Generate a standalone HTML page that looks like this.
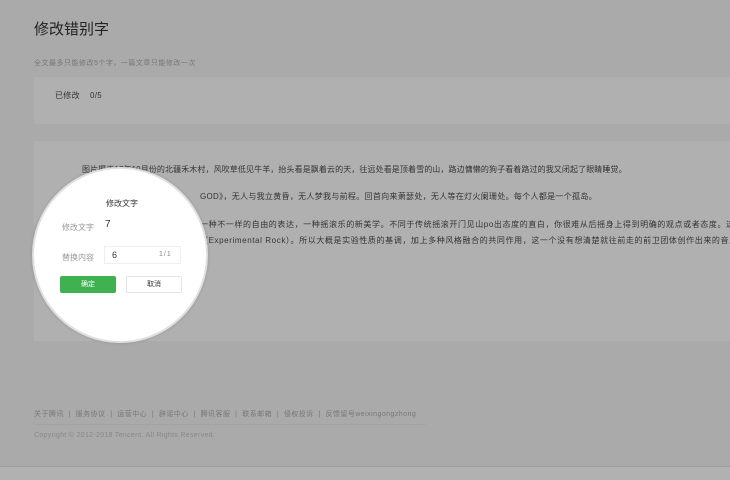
<!DOCTYPE html><html><head><meta charset="utf-8"><style>
*{margin:0;padding:0;box-sizing:border-box}
body{width:730px;height:480px;background:#aaaaaa;font-family:"Liberation Sans","Noto Sans CJK SC",sans-serif;position:relative;overflow:hidden;color:#333}
.a{position:absolute;white-space:nowrap}
.p{position:absolute;background:#b0b0b0}
.t{font-size:8px;color:#333;letter-spacing:0.3px}
</style></head><body>
<div class="a" style="left:34px;top:18px;font-size:15px;color:#222">修改错别字</div>
<div class="a" style="left:34px;top:58px;font-size:7px;color:#777;letter-spacing:0.5px">全文最多只能修改5个字，一篇文章只能修改一次</div>
<div class="p" style="left:34px;top:77px;width:700px;height:47px"></div>
<div class="a t" style="left:55px;top:90px">已修改&nbsp;&nbsp;&nbsp;&nbsp;0/5</div>
<div class="p" style="left:34px;top:141px;width:700px;height:200px"></div>
<div class="a t" style="left:82px;top:164px;letter-spacing:0.1px">图片摄于17年10月份的北疆禾木村，风吹草低见牛羊，抬头看是飘着云的天，往远处看是顶着雪的山，路边慵懒的狗子看着路过的我又闭起了眼睛睡觉。</div>
<div class="a t" style="left:200px;top:191px">GOD》，无人与我立黄昏，无人梦我与前程。回首向来萧瑟处，无人等在灯火阑珊处。每个人都是一个孤岛。</div>
<div class="a t" style="left:200px;top:219px;letter-spacing:0.6px">一种不一样的自由的表达，一种摇滚乐的新美学。不同于传统摇滚开门见山po出态度的直白，你很难从后摇身上得到明确的观点或者态度。这</div>
<div class="a t" style="left:200px;top:235px;letter-spacing:0.6px">（Experimental Rock）。所以大概是实验性质的基调，加上多种风格融合的共同作用，这一个没有想清楚就往前走的前卫团体创作出来的音乐</div>
<div class="a t" style="left:200px;top:247px">。</div>
<div style="position:absolute;left:32px;top:167px;width:176px;height:176px;border-radius:50%;background:#fff;border:2px solid #e0e0e0;box-shadow:0 0 3px rgba(0,0,0,.15)"></div>
<div class="a" style="left:106px;top:198px;font-size:8px;color:#333">修改文字</div>
<div class="a" style="left:62px;top:222px;font-size:8px;color:#999">修改文字</div>
<div class="a" style="left:105px;top:219px;font-size:10px;color:#333">7</div>
<div class="a" style="left:62px;top:252px;font-size:8px;color:#999">替换内容</div>
<div style="position:absolute;left:104px;top:246px;width:77px;height:18px;border:1px solid #eee"></div>
<div class="a" style="left:112px;top:250px;font-size:9px;color:#333">6</div>
<div class="a" style="left:159px;top:251px;font-size:7px;color:#888;letter-spacing:1px">1/1</div>
<div style="position:absolute;left:60px;top:276px;width:56px;height:17px;background:#3fb151;border-radius:2px;color:#fff;font-size:7px;text-align:center;line-height:17px">确定</div>
<div style="position:absolute;left:126px;top:276px;width:56px;height:17px;border:1px solid #e4e4e4;border-radius:2px;color:#333;font-size:7px;text-align:center;line-height:15px">取消</div>
<div class="a" style="left:34px;top:409px;font-size:7px;color:#777;letter-spacing:0.45px">关于腾讯 &nbsp;|&nbsp; 服务协议 &nbsp;|&nbsp; 运营中心 &nbsp;|&nbsp; 辟谣中心 &nbsp;|&nbsp; 腾讯客服 &nbsp;|&nbsp; 联系邮箱 &nbsp;|&nbsp; 侵权投诉 &nbsp;|&nbsp; 反馈留号weixingongzhong</div>
<div style="position:absolute;left:34px;top:424px;width:392px;height:1px;background:#a3a3a3"></div>
<div class="a" style="left:34px;top:432px;font-size:7px;color:#888;letter-spacing:0.3px">Copyright © 2012-2018 Tencent. All Rights Reserved.</div>
<div style="position:absolute;left:0;top:466px;width:730px;height:14px;background:#b1b1b1;border-top:1px solid #9e9e9e"></div>
</body></html>
